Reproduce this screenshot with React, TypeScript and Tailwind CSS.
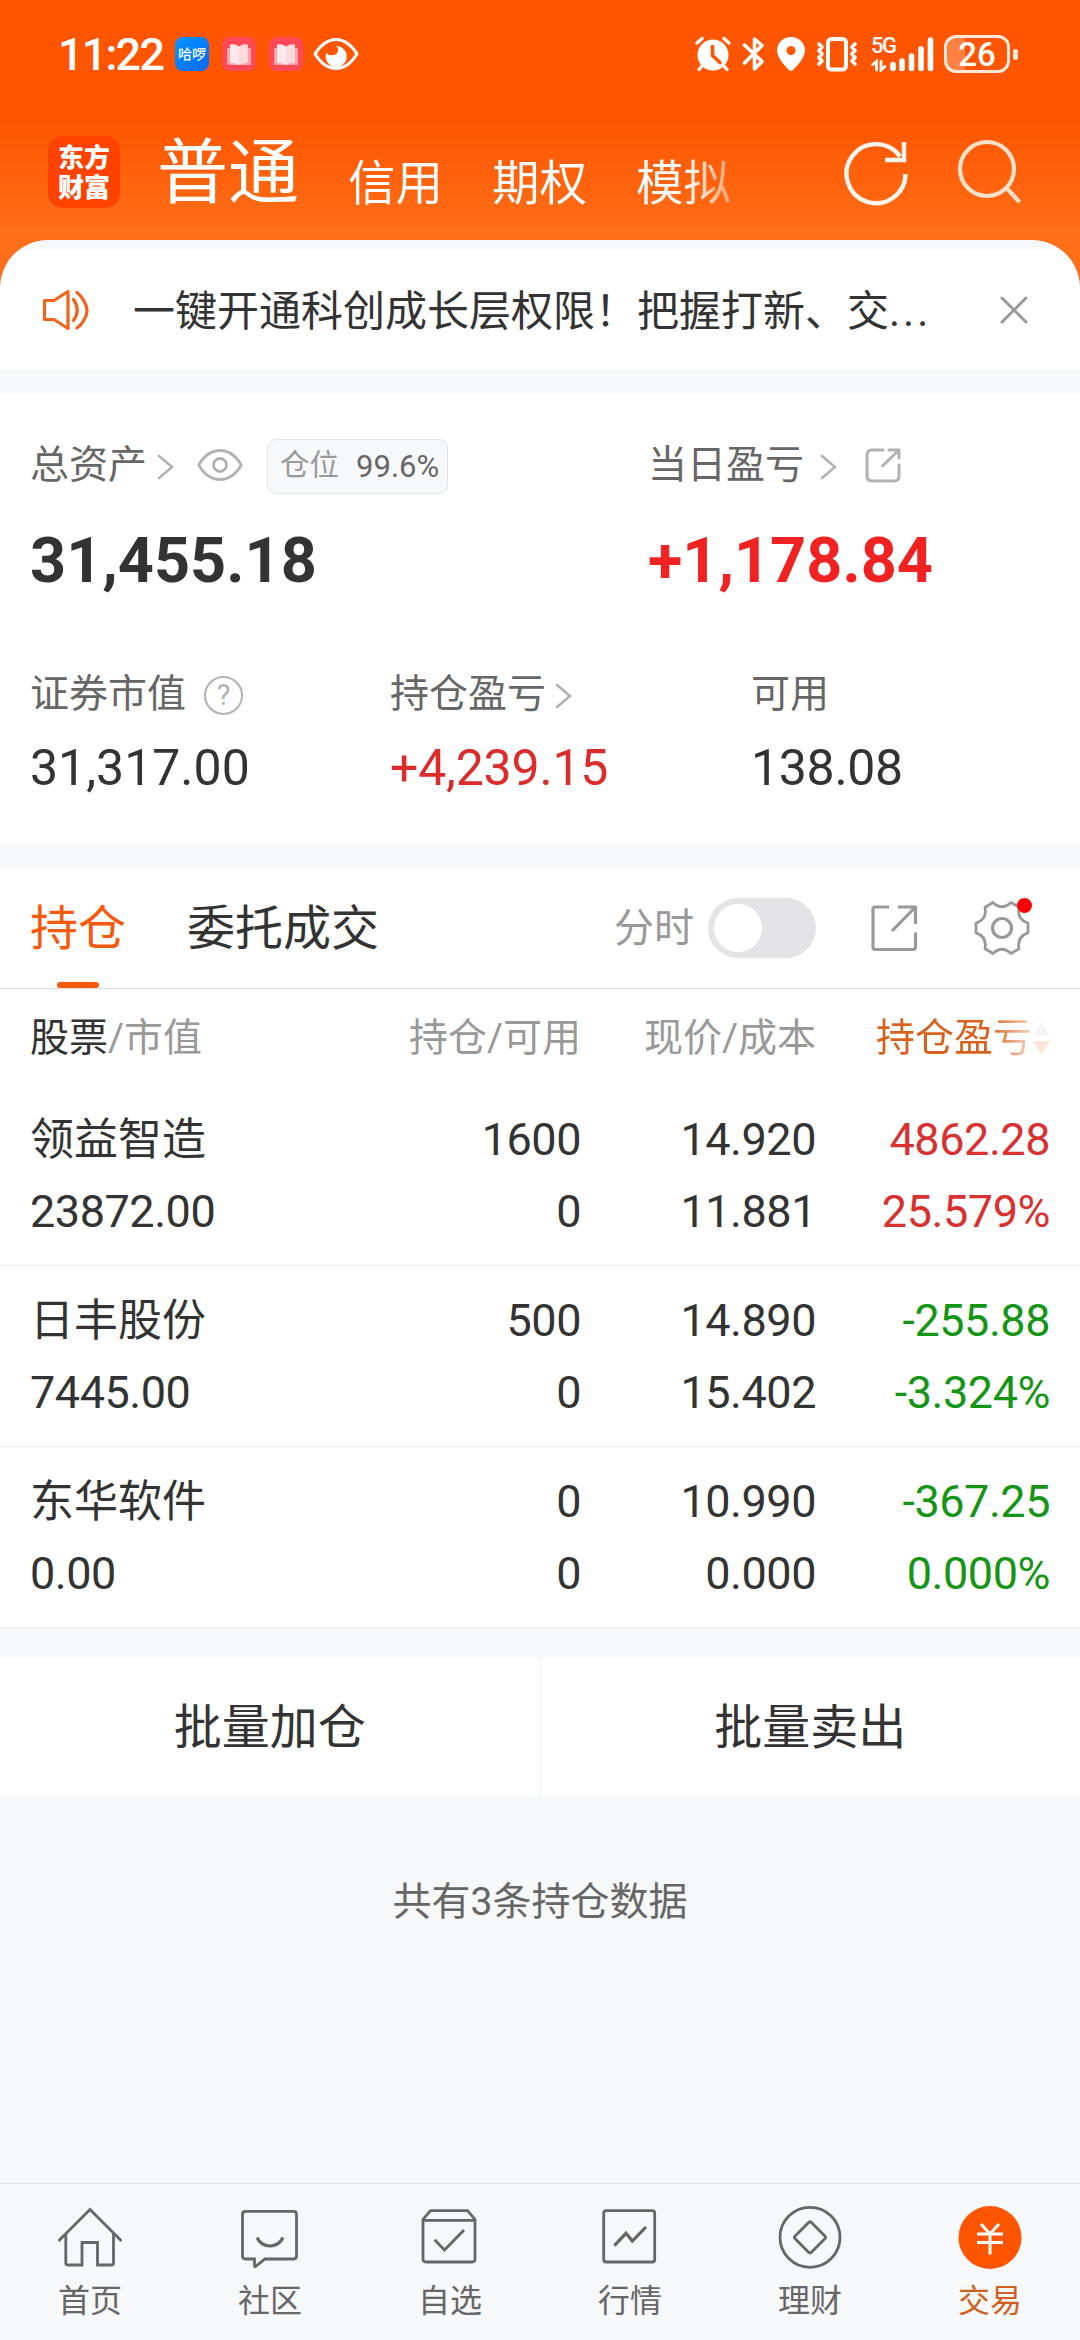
import type { ReactNode } from 'react'

type Holding = {
  name: string
  value: string
  amount: string
  usable: string
  price: string
  cost: string
  profit: string
  rate: string
  up: boolean
}

const holdings: Holding[] = [
  {
    name: '领益智造',
    value: '23872.00',
    amount: '1600',
    usable: '0',
    price: '14.920',
    cost: '11.881',
    profit: '4862.28',
    rate: '25.579%',
    up: true,
  },
  {
    name: '日丰股份',
    value: '7445.00',
    amount: '500',
    usable: '0',
    price: '14.890',
    cost: '15.402',
    profit: '-255.88',
    rate: '-3.324%',
    up: false,
  },
  {
    name: '东华软件',
    value: '0.00',
    amount: '0',
    usable: '0',
    price: '10.990',
    cost: '0.000',
    profit: '-367.25',
    rate: '0.000%',
    up: false,
  },
]

function Chevron({ className = '' }: { className?: string }) {
  return (
    <svg className={className} width="17" height="26" viewBox="0 0 17 26" fill="none" stroke="#b2b2b2" strokeWidth="2.6" strokeLinecap="round">
      <path d="M2 2 L15 13 L2 24" />
    </svg>
  )
}

function BookIcon({ className = '' }: { className?: string }) {
  return (
    <svg className={className} width="34" height="34" viewBox="0 0 34 34">
      <rect width="34" height="34" rx="8" fill="#ff4a55" />
      <rect x="5" y="11" width="24" height="17" rx="1.5" fill="#ffa3a8" />
      <path d="M8 7.5 q5 -1 9 2 v18.500 q-4 -2.500 -9 -2 z" fill="#ffe9ea" />
      <path d="M26 7.500 q-5 -1 -9 2 v18.500 q4 -2.500 9 -2 z" fill="#ffd9dc" />
    </svg>
  )
}

function StatusBar() {
  return (
    <div className="flex h-[108px] items-center pl-[58px] pr-[62px] text-white">
      <span className="w-[117px] text-[45px] leading-none font-medium tracking-[-1.800px] whitespace-nowrap">11:22</span>
      <div className="flex h-[34px] w-[34px] items-center justify-center rounded-[8px] bg-linear-to-br from-[#0a95ff] to-[#0a66ff] text-[14px] leading-none font-medium whitespace-nowrap">
        哈啰
      </div>
      <BookIcon className="ml-[13px]" />
      <BookIcon className="ml-[13px]" />
      <svg className="ml-[10px]" width="46" height="34" viewBox="0 0 46 34" fill="none">
        <path d="M2 17 Q11 2.500 23 2.500 T44 17 Q35 31.500 23 31.500 T2 17 Z" stroke="#fff" strokeWidth="3" strokeLinejoin="round" />
        <path d="M23 9 a10.500 10.500 0 1 1 -9.500 6.500 a5 5 0 0 0 6 2.500 a5 5 0 0 0 3.500 -9 z" fill="#fff" />
      </svg>

      <div className="ml-auto flex items-center">
        <svg width="38" height="36" viewBox="0 0 38 36" fill="none" stroke="#fff" strokeLinecap="round">
          <circle cx="19" cy="19" r="15.500" fill="#fff" stroke="none" />
          <path d="M3 7 L8 2.500 M35 7 L30 2.500 M8 30 L5 33.500 M30 30 L33 33.500" strokeWidth="3.400" />
          <path d="M18.500 10.500 V19.500 L26 26.500" stroke="#ff5500" strokeWidth="3.600" />
        </svg>
        <svg className="ml-[10px]" width="24" height="36" viewBox="0 0 24 36" fill="none" stroke="#fff" strokeWidth="3.600" strokeLinecap="round" strokeLinejoin="round">
          <path d="M2.500 9 L20 25.500 L12.500 33 V21 M12.500 15 V3 L20 9.500 L2.500 27" />
        </svg>
        <svg className="ml-[10px]" width="30" height="36" viewBox="0 0 30 36">
          <path fillRule="evenodd" d="M15 1 C23 1 29 7 29 14.500 C29 22 20 31 17 34 Q15 36 13 34 C10 31 1 22 1 14.500 C1 7 7 1 15 1 Z M15 10 a4.500 4.500 0 1 0 0.010 0 Z" fill="#fff" />
        </svg>
        <svg className="ml-[9px]" width="44" height="36" viewBox="0 0 44 36" fill="none" stroke="#fff" strokeLinecap="round" strokeLinejoin="round">
          <rect x="13" y="3" width="18" height="30.500" rx="3.500" strokeWidth="4" />
          <path d="M4 8 L7 11 L4 14.500 L7 18 L4 21.500 L7 25 L4 28 M40 8 L37 11 L40 14.500 L37 18 L40 21.500 L37 25 L40 28" strokeWidth="3.600" />
        </svg>
        <div className="relative ml-[12px] h-[36px] w-[66px]">
          <span className="absolute top-px left-0 text-[22px] leading-[18px] font-medium tracking-[-1.500px]">5G</span>
          <svg className="h-full w-full" viewBox="0 0 66 36" fill="none" stroke="#fff" strokeLinecap="round">
            <path d="M22 28.500 V32.500 M31 25 V32.500 M40.500 20 V32.500 M50 13 V32.500 M59.500 4 V32.500" strokeWidth="5.600" />
            <path d="M5.500 34 V25.500 L1.800 28.500 M10 25.500 V34 L13.800 30.500" strokeWidth="2.800" />
          </svg>
        </div>
        <div className="ml-[7px] flex h-[38px] w-[66px] items-center justify-center rounded-[12px] border-3 border-[#ffe9dc] bg-linear-to-r from-[#ff8040] from-30% to-transparent to-30% text-[33px] leading-none font-medium">
          26
        </div>
        <div className="ml-[3px] h-[11px] w-[5px] rounded-full bg-[#ffe9dc]" />
      </div>
    </div>
  )
}

function AccountTabs() {
  return (
    <div className="flex h-[132px] items-start pl-[48px] text-white">
      <div className="mt-[28px] flex h-[72px] w-[72px] flex-col items-center justify-center rounded-[15px] bg-[#ff4200] pt-[2px] text-[26px] leading-[30px] font-black">
        <span>东方</span>
        <span>财富</span>
      </div>
      <span className="mt-[29px] ml-[37px] w-[191px] text-[71px] leading-[72px]">普通</span>
      <div className="mt-[50px] flex gap-[49px] bg-linear-to-r from-white from-88% to-white/40 bg-clip-text text-[47.500px] leading-[52px] text-transparent">
        <span>信用</span>
        <span>期权</span>
        <span>模拟</span>
      </div>
      <svg className="mt-[30px] ml-[112px]" width="66" height="68" viewBox="0 0 66 68" fill="none" stroke="#fff4ec" strokeWidth="4.400">
        <path d="M62.500 36 A29.500 29.500 0 1 1 57 18.500" />
        <path d="M61 4 V22 H42" />
      </svg>
      <svg className="mt-[30px] ml-[47px]" width="66" height="66" viewBox="0 0 66 66" fill="none" stroke="#ffe0ca" strokeWidth="4.200">
        <circle cx="31" cy="31" r="27" />
        <path d="M50.500 50 L63.500 64" />
      </svg>
    </div>
  )
}

function Notice() {
  return (
    <div className="flex h-[130px] items-center rounded-t-[48px] bg-[linear-gradient(#f7f8fa_10px,#fff_10px)] pt-[10px] pl-[41px] text-[#333]">
      <svg width="50" height="44" viewBox="0 0 50 44" fill="none" stroke="#f0641e" strokeWidth="3.200" strokeLinejoin="round">
        <path d="M3.500 12.500 H13 L27 3.500 V40.500 L13 31.500 H3.500 Z M27 3.500 V40.500" />
        <path d="M32.500 11.500 Q40 22 32.500 32.500 M36 4.500 Q40.500 8 43 13 Q49 23 43 32 Q40.500 37 36 40" strokeLinecap="round" />
      </svg>
      <p className="mt-[3px] ml-[42px] w-[867px] text-[42px] leading-[60px] whitespace-nowrap">
        一键开通科创成长层权限！把握打新、交<span className="tracking-[3px]">...</span>
      </p>
      <svg width="28" height="28" viewBox="0 0 28 28" stroke="#999" strokeWidth="3" strokeLinecap="round">
        <path d="M2 2 L26 26 M26 2 L2 26" />
      </svg>
    </div>
  )
}

function Assets() {
  return (
    <section className="h-[450px] bg-white pl-[30px] pt-[37px]">
      <div className="flex">
        <div className="w-[618px]">
          <div className="flex h-[68px] items-center text-[39px] leading-none text-[#666]">
            <span>总资产</span>
            <Chevron className="mt-[3px] ml-[10px]" />
            <svg className="ml-[23px]" width="46" height="32" viewBox="0 1 46 32" fill="none" stroke="#b2b2b2" strokeWidth="2.800" strokeLinejoin="round">
              <path d="M1.800 17 Q10 2.500 23 2.500 T44.200 17 Q36 31.500 23 31.500 T1.800 17 Z" />
              <circle cx="23" cy="17" r="6.500" />
            </svg>
            <div className="mt-[2px] ml-[24px] flex h-[55px] w-[181px] items-center rounded-[9px] border border-[#e3e4e6] bg-[#f7f8fa] pl-[12px]">
              <span className="text-[29.500px] text-[#999]">仓位</span>
              <span className="ml-[17px] text-[31px]">99.6%</span>
            </div>
          </div>
          <p className="mt-[25px] text-[63px] leading-[74px] font-bold text-[#333]">31,455.18</p>
        </div>
        <div>
          <div className="flex h-[68px] items-center text-[39px] leading-none text-[#666]">
            <span>当日盈亏</span>
            <Chevron className="mt-[3px] ml-[16px]" />
            <svg className="mt-[2px] ml-[28px]" width="36" height="36" viewBox="0 0 36 36" fill="none" stroke="#b2b2b2" strokeWidth="3" strokeLinecap="round" strokeLinejoin="round">
              <path d="M18 2 H7 Q2 2 2 7 V28 Q2 33 7 33 H29 Q34 33 34 28 V17 M24 2 H34 V10 M34 2 L17.500 18" />
            </svg>
          </div>
          <p className="mt-[25px] text-[63px] leading-[74px] font-bold text-[#f02222]">+1,178.84</p>
        </div>
      </div>
      <div className="mt-[70px] grid grid-cols-[360px_361px_1fr] text-[39px] text-[#666]">
        <div>
          <div className="flex h-[52px] items-center leading-none">
            <span>证券市值</span>
            <div className="mt-[3px] ml-[18px] flex h-[39px] w-[39px] items-center justify-center rounded-full border-[2.500px] border-[#b2b2b2] text-[29px] text-[#b2b2b2]">?</div>
          </div>
          <p className="mt-[18px] text-[50px] leading-[60px] text-[#333]">31,317.00</p>
        </div>
        <div>
          <div className="flex h-[52px] items-center leading-none">
            <span>持仓盈亏</span>
            <Chevron className="mt-[3px] ml-[9px]" />
          </div>
          <p className="mt-[18px] text-[50px] leading-[60px] tracking-[-0.200px] text-[#dc2b2b]">+4,239.15</p>
        </div>
        <div>
          <div className="flex h-[52px] items-center leading-none">
            <span>可用</span>
          </div>
          <p className="mt-[18px] text-[50px] leading-[60px] tracking-[-0.300px] text-[#333]">138.08</p>
        </div>
      </div>
    </section>
  )
}

function HoldingTabs() {
  return (
    <div className="flex h-[121px] border-b border-[#dedede] pl-[30px] text-[48px] leading-[122px]">
      <div className="relative text-[#f55a0c]">
        持仓
        <div className="absolute bottom-0 left-[27px] h-[6px] w-[42px] rounded-full bg-[#f55a0c]" />
      </div>
      <span className="ml-[61px] text-[#333]">委托成交</span>
      <span className="ml-[235px] text-[40px] text-[#999]">分时</span>
      <div className="mt-[30px] ml-[14px] h-[60px] w-[108px] rounded-full bg-[#e4e4e6] p-[6px]">
        <div className="h-[48px] w-[48px] rounded-full bg-white" />
      </div>
      <svg className="mt-[36px] ml-[54px]" width="48" height="48" viewBox="0 0 48 48" fill="none" stroke="#999" strokeWidth="3.200" strokeLinejoin="round">
        <path d="M19 3 H5 Q3 3 3 5 V43 Q3 45.500 5 45.500 H43 Q45.500 45.500 45.500 43 V28.500 M28 3 H45.500 V20 M45.500 3 L22 27" />
      </svg>
      <div className="relative mt-[32px] ml-[55px] h-[56px] w-[58px]">
        <svg width="58" height="56" viewBox="-29 -28 58 56" fill="none" stroke="#999" strokeWidth="2.800" strokeLinejoin="round">
          <circle r="9.500" strokeWidth="3.200" />
          <path d="M-9 -25.500 Q0 -17 9 -25.500 L17 -20.800 C15.500 -13 18 -7.500 26 -4.800 V4.800 C18 7.500 15.500 13 17 20.800 L9 25.500 Q0 17 -9 25.500 L-17 20.800 C-15.500 13 -18 7.500 -26 4.800 V-4.800 C-18 -7.500 -15.500 -13 -17 -20.800 Z" />
        </svg>
        <div className="absolute top-[-2px] right-[-1px] h-[15px] w-[15px] rounded-full bg-[#ff0000]" />
      </div>
    </div>
  )
}

function HoldingTable() {
  const columns = 'grid grid-cols-[316px_235px_235px_234px] px-[30px]'

  return (
    <div>
      <div className={`${columns} h-[96px] text-right text-[39px] leading-[98px] text-[#999]`}>
        <span className="text-left">
          <span className="text-[#333]">股票</span>/市值
        </span>
        <span>持仓/可用</span>
        <span>现价/成本</span>
        <div className="flex items-center justify-end">
          <span className="bg-linear-to-r from-[#d9601c] from-72% to-[#d9601c]/25 bg-clip-text text-transparent">持仓盈亏</span>
          <svg className="ml-px" width="17" height="36" viewBox="0 0 17 36">
            <path d="M0.500 15 L8.500 1 L16.500 15 Z" fill="#f5f5f5" />
            <path d="M0.500 21 H16.500 L8.500 35 Z" fill="#fde5da" />
          </svg>
        </div>
      </div>
      {holdings.map((item) => (
        <div key={item.name} className={`${columns} border-b border-[#ebebeb] pt-[19px] pb-[17px] text-right text-[45px] leading-[72px] tracking-[-0.450px] text-[#333]`}>
          <div className="text-left">
            <p className="text-[44px] tracking-normal">{item.name}</p>
            <p>{item.value}</p>
          </div>
          <div>
            <p>{item.amount}</p>
            <p>{item.usable}</p>
          </div>
          <div>
            <p>{item.price}</p>
            <p>{item.cost}</p>
          </div>
          <div className={item.up ? 'text-[#d93030]' : 'text-[#159515]'}>
            <p>{item.profit}</p>
            <p>{item.rate}</p>
          </div>
        </div>
      ))}
    </div>
  )
}

function NavItem({ label, active, children }: { label: string; active?: boolean; children: ReactNode }) {
  return (
    <div className={`flex flex-1 flex-col items-center pt-[20px] text-[32px] leading-[40px] ${active ? 'text-[#d0601f]' : 'text-[#666]'}`}>
      <svg width="64" height="66" viewBox="0 0 64 66" fill="none" stroke="#666" strokeWidth="2.800">
        {children}
      </svg>
      <span className="mt-[11px]">{label}</span>
    </div>
  )
}

function BottomNav() {
  return (
    <nav className="mt-auto flex h-[157px] border-t border-[#e2e3e5]">
      <NavItem label="首页">
        <path d="M0.500 37 L32 5.500 L63.500 37 M7.800 30 V59 Q7.800 61 9.800 61 H24 V38.500 H39.500 V61 H53.500 Q55.500 61 55.500 59 V30" />
      </NavItem>
      <NavItem label="社区">
        <path d="M7.500 7.300 H55.500 Q58.500 7.300 58.500 10.300 V52 Q58.500 55 55.500 55 H27 L17.500 62.500 Q16.500 63 16.500 61.500 V55 H7.500 Q4.500 55 4.500 52 V10.300 Q4.500 7.300 7.500 7.300 Z" />
        <path d="M19 33.500 Q23 42 32 42 T45 33.500" strokeWidth="3.200" />
      </NavItem>
      <NavItem label="自选">
        <path d="M5 15.300 L12.500 6.700 H49.500 L57 15.300 V55 Q57 58 54 58 H8 Q5 58 5 55 Z M5 16.300 H57" strokeLinejoin="round" />
        <path d="M16.600 35.700 L26.500 46 L46 26" />
      </NavItem>
      <NavItem label="行情">
        <rect x="5.700" y="6.700" width="51" height="51.300" rx="2.500" />
        <path d="M16.400 41.700 L28 29.300 L34.300 37 L48 23" strokeWidth="3.200" />
      </NavItem>
      <NavItem label="理财">
        <circle cx="32" cy="33.300" r="30" />
        <rect x="20.500" y="21.800" width="23" height="23" rx="2" transform="rotate(45 32 33.300)" />
      </NavItem>
      <NavItem label="交易" active>
        <circle cx="32" cy="33.500" r="31.500" fill="#ff5500" stroke="none" />
        <path d="M23 20 L32 30 L41 20 M19 30 H45 M19 38.500 H45 M32 30 V50.500" stroke="#fff" strokeWidth="3" />
      </NavItem>
    </nav>
  )
}

export default function App() {
  return (
    <main className="flex h-[2340px] w-[1080px] flex-col overflow-hidden bg-[#f7f8fa] [font-family:Roboto,'Noto_Sans_CJK_SC',sans-serif]">
      <header className="bg-[linear-gradient(#ff5500_118px,#ff6e18_235px)]">
        <StatusBar />
        <AccountTabs />
        <Notice />
      </header>
      <div className="h-[24px]" />
      <Assets />
      <div className="h-[24px]" />
      <section className="bg-white">
        <HoldingTabs />
        <HoldingTable />
      </section>
      <div className="mt-[30px] flex h-[138px] divide-x divide-[#f2f3f5] bg-white text-center text-[48px] leading-[140px] text-[#333]">
        <span className="flex-1">批量加仓</span>
        <span className="flex-1">批量卖出</span>
      </div>
      <p className="mt-[76px] text-center text-[39px] leading-[60px] text-[#666]">共有3条持仓数据</p>
      <BottomNav />
    </main>
  )
}
